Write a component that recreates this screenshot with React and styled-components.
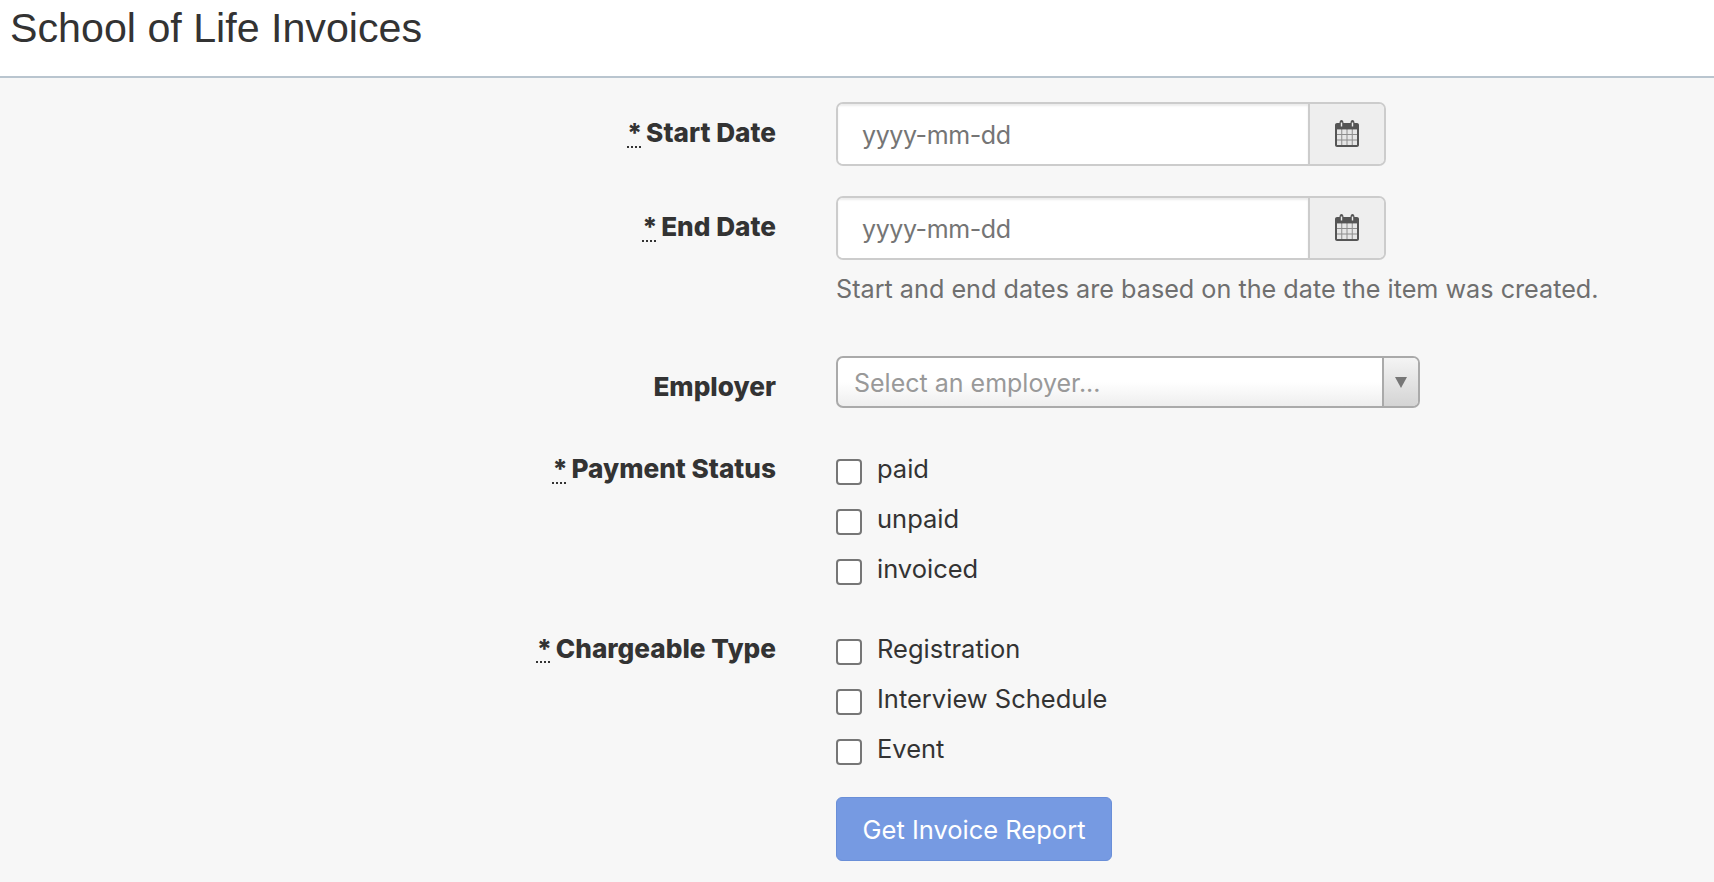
import styled, { createGlobalStyle } from "styled-components";

const GlobalStyle = createGlobalStyle`
  html, body {
    margin: 0;
    height: 100%;
    background: #f7f7f7;
    color: #333;
    font-family: Inter, "Liberation Sans", sans-serif;
  }
  * { box-sizing: border-box; }
`;

const paymentOptions = ["paid", "unpaid", "invoiced"];
const chargeOptions = ["Registration", "Interview Schedule", "Event"];

export default function App() {
  return (
    <>
      <GlobalStyle />
      <Header>
        <h1>School of Life Invoices</h1>
      </Header>
      <Form onSubmit={e => e.preventDefault()}>
        <DateRow>
          <Label><abbr title="required">*</abbr> Start Date</Label>
          <DateField />
        </DateRow>
        <DateRow>
          <Label><abbr title="required">*</abbr> End Date</Label>
          <div>
            <DateField />
            <Help>Start and end dates are based on the date the item was created.</Help>
          </div>
        </DateRow>
        <EmployerRow>
          <Label>Employer</Label>
          <Select>
            <span>Select an employer...</span>
            <Arrow><i /></Arrow>
          </Select>
        </EmployerRow>
        <CheckRow>
          <Label><abbr title="required">*</abbr> Payment Status</Label>
          <CheckList options={paymentOptions} />
        </CheckRow>
        <CheckRow>
          <Label><abbr title="required">*</abbr> Chargeable Type</Label>
          <CheckList options={chargeOptions} />
        </CheckRow>
        <ButtonRow>
          <SubmitButton type="submit">Get Invoice Report</SubmitButton>
        </ButtonRow>
      </Form>
    </>
  );
}

function DateField() {
  return (
    <InputGroup>
      <input type="text" placeholder="yyyy-mm-dd" />
      <AddOn><CalendarIcon /></AddOn>
    </InputGroup>
  );
}

function CheckList({ options }) {
  return (
    <Checks>
      {options.map(option => (
        <CheckLabel key={option}>
          <input type="checkbox" />
          {option}
        </CheckLabel>
      ))}
    </Checks>
  );
}

function CalendarIcon() {
  return (
    <svg width="24" height="27" viewBox="0 0 24 27" aria-hidden="true">
      <path
        fill="#555"
        fillRule="evenodd"
        d="M4.500 3C4.500 1.200 5.400 0 6.500 0s2 1.200 2 3h7c0-1.800.9-3 2-3s2 1.200 2 3H22c1.100 0 2 .9 2 2v20c0 1.100-.9 2-2 2H2c-1.100 0-2-.9-2-2V5c0-1.100.9-2 2-2h2.500zM5.800 2.500v4h1.400v-4H5.800zM16.800 2.500v4h1.400v-4h-1.400z"
      />
      <rect x="2" y="9.500" width="20" height="15.500" fill="#8d8d8d" />
      <path
        fill="#e6e6e6"
        d="M2 9.500h4.250v4.500H2zM7.250 9.500h4.250v4.500H7.250zM12.500 9.500h4.250v4.500H12.500zM17.750 9.500H22v4.500h-4.250zM2 15h4.250v4.500H2zM7.250 15h4.250v4.500H7.250zM12.500 15h4.250v4.500H12.500zM17.750 15H22v4.500h-4.250zM2 20.500h4.250V25H2zM7.250 20.500h4.250V25H7.250zM12.500 20.500h4.250V25H12.500zM17.750 20.500H22V25h-4.250z"
      />
    </svg>
  );
}

const Header = styled.header`
  height: 78px;
  padding: 3px 10px 0;
  background: #fff;
  border-bottom: 2px solid #b9c5cf;

  h1 {
    margin: 0;
    font-family: "Liberation Sans", Arial, sans-serif;
    font-size: 41.2px;
    font-weight: 400;
    line-height: 50px;
    color: #333;
  }
`;

const Form = styled.form`
  padding-top: 24px;
`;

const Row = styled.div`
  display: grid;
  grid-template-columns: 776px 1fr;
  column-gap: 60px;
`;

const DateRow = styled(Row)`
  margin-bottom: 30px;
`;

const EmployerRow = styled(Row)`
  margin-top: 51px;
  margin-bottom: 30px;
`;

const CheckRow = styled(Row)`
  margin-bottom: 30.5px;
`;

const ButtonRow = styled(Row)`
  grid-template-columns: 1fr;
  padding-left: 836px;
`;

const Label = styled.label`
  padding-top: 13px;
  text-align: right;
  font-size: 26.2px;
  font-weight: 800;
  line-height: 36px;
  color: #333;

  abbr {
    margin-right: -2px;
    text-decoration: underline dotted 2px;
    text-underline-offset: 4px;
  }
`;

const InputGroup = styled.div`
  display: flex;
  width: 550px;
  height: 64px;
  border: 2px solid #ccc;
  border-radius: 7px;
  overflow: hidden;
  background: #fff;

  input {
    flex: 1;
    min-width: 0;
    padding: 2px 24px 0;
    border: 0;
    outline: 0;
    font: 400 25px Inter, sans-serif;
    letter-spacing: -0.4px;
    color: #333;
    box-shadow: inset 0 2px 2px rgba(0, 0, 0, 0.08);
  }
  input::placeholder {
    color: #757575;
    opacity: 1;
  }
`;

const AddOn = styled.span`
  display: flex;
  align-items: center;
  justify-content: center;
  width: 76px;
  padding-bottom: 2px;
  background: #eee;
  border-left: 2px solid #ccc;
`;

const Help = styled.p`
  margin: 13px 0 0;
  font-size: 25.2px;
  line-height: 32px;
  color: #6f6f6f;
  white-space: nowrap;
`;

const Select = styled.div`
  display: flex;
  align-items: stretch;
  width: 584px;
  height: 52px;
  border: 2px solid #aaa;
  border-radius: 7px;
  overflow: hidden;
  background: linear-gradient(#fff 50%, #eee);
  font-size: 25px;
  color: #999;

  span:first-child {
    flex: 1;
    padding-left: 16px;
    line-height: 50px;
  }
`;

const Arrow = styled.span`
  display: flex;
  align-items: center;
  justify-content: center;
  width: 36px;
  border-left: 2px solid #aaa;
  background: linear-gradient(#f4f4f4, #d4d4d4);

  i {
    width: 0;
    height: 0;
    border-left: 6px solid transparent;
    border-right: 6px solid transparent;
    border-top: 11px solid #777;
  }
`;

const Checks = styled.div`
  display: flex;
  flex-direction: column;
  gap: 14px;
  padding-top: 13px;
`;

const CheckLabel = styled.label`
  display: flex;
  align-items: flex-start;
  gap: 15px;
  font-size: 25.5px;
  line-height: 36px;
  color: #333;

  input {
    appearance: none;
    flex: none;
    width: 26px;
    height: 26px;
    margin: 8px 0 0;
    border: 2px solid #767676;
    border-radius: 4px;
    background: #fff;
  }
`;

const SubmitButton = styled.button`
  width: 276px;
  height: 64px;
  border: 1px solid #6a8fd8;
  border-radius: 6px;
  background: #769ae2;
  color: #fff;
  font: 400 25.5px Inter, sans-serif;
`;
